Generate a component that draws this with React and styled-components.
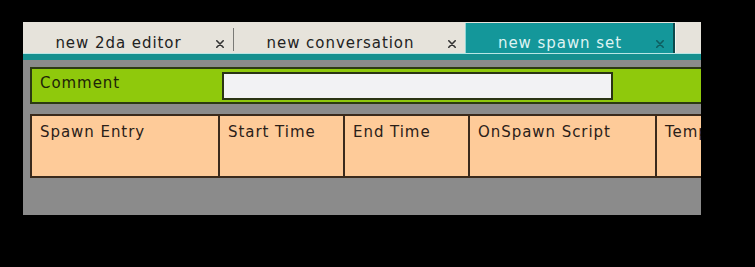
import React from "react";
import styled, { createGlobalStyle } from "styled-components";

const Global = createGlobalStyle`
  html, body { margin: 0; padding: 0; background: #000; }
  body { width: 755px; height: 267px; overflow: hidden; font-family: "DejaVu Sans", Verdana, sans-serif; }
`;

const Page = styled.div`
  padding: 22px 0 0 23px;
`;

const Panel = styled.div`
  width: 678px;
  height: 193px;
  background: #8b8b8b;
  overflow: hidden;
  display: flex;
  flex-direction: column;
`;

const TabBar = styled.div`
  display: flex;
  height: 31px;
  background: #e6e3db;
  flex: none;
`;

const Tab = styled.div`
  box-sizing: border-box;
  width: ${(p) => p.$width}px;
  flex: none;
  display: flex;
  align-items: center;
  padding-top: 10px;
  margin-top: ${(p) => (p.$active ? 1 : 0)}px;
  background: ${(p) => (p.$active ? "#14979a" : "transparent")};
  border-left: ${(p) => (p.$active ? "1px solid #8fd6d6" : "none")};
  border-right: ${(p) => (p.$active ? "2px solid #0d4a4c" : "none")};
`;

const TabLabel = styled.span`
  flex: 1;
  text-align: center;
  font-size: 15px;
  line-height: 18px;
  letter-spacing: 0.95px;
  color: ${(p) => (p.$active ? "#dff3f3" : "#222")};
  white-space: nowrap;
`;

const Close = styled.span`
  width: 12px;
  margin-right: 7px;
  display: flex;
  justify-content: center;
  align-items: center;
  padding-top: 2px;
  color: ${(p) => (p.$active ? "#0e5e60" : "#333")};
`;

const Divider = styled.div`
  width: 1px;
  margin: 6px 1px 2px 0;
  background: #7a7a76;
  flex: none;
`;

const Filler = styled.div`
  flex: 1;
  border-left: 1px solid #f6f4ee;
`;

const Stripe = styled.div`
  height: 6px;
  flex: none;
  background: #16908f;
  border-top: 1px solid #b9e6e4;
`;

const Body = styled.div`
  padding: 7px 0 0 7px;
  display: flex;
  flex-direction: column;
  gap: 10px;
`;

const FieldRow = styled.div`
  box-sizing: border-box;
  width: 720px;
  height: 37px;
  display: flex;
  align-items: flex-start;
  background: #8fc90c;
  border: 2px solid #2c3a12;
`;

const FieldLabel = styled.div`
  box-sizing: border-box;
  width: 190px;
  padding: 5px 0 0 8px;
  font-size: 15px;
  line-height: 18px;
  letter-spacing: 0.95px;
  color: #1d2408;
`;

const FieldInput = styled.div`
  box-sizing: border-box;
  margin-top: 3px;
  width: 391px;
  height: 28px;
  background: #f2f2f4;
  border: 2px solid #2a3414;
`;

const Table = styled.div`
  box-sizing: border-box;
  width: 720px;
  height: 64px;
  display: flex;
  background: #fecb99;
  border: 2px solid #3a2a1c;
`;

const HeadCell = styled.div`
  box-sizing: border-box;
  width: ${(p) => p.$width}px;
  flex: none;
  padding: 7px 0 0 8px;
  border-right: 2px solid #3a2a1c;
  font-size: 15px;
  line-height: 18px;
  letter-spacing: 0.95px;
  color: #2a2018;
  white-space: nowrap;
`;

const XIcon = () => (
  <svg width="8" height="8" viewBox="0 0 8 8">
    <path d="M0.8 0.8 L7.2 7.2 M7.2 0.8 L0.8 7.2" stroke="currentColor" strokeWidth="1.6" strokeLinecap="round" />
  </svg>
);

const tabs = [
  { label: "new 2da editor", width: 210 },
  { label: "new conversation", width: 230 },
  { label: "new spawn set", width: 210, active: true },
];

const columns = [
  { label: "Spawn Entry", width: 188 },
  { label: "Start Time", width: 125 },
  { label: "End Time", width: 125 },
  { label: "OnSpawn Script", width: 187 },
  { label: "Template", width: 120 },
];

export default function App() {
  return (
    <>
      <Global />
      <Page>
        <Panel>
          <TabBar>
            {tabs.map((t, i) => (
              <React.Fragment key={t.label}>
                <Tab $width={t.width} $active={t.active}>
                  <TabLabel $active={t.active}>{t.label}</TabLabel>
                  <Close $active={t.active}>
                    <XIcon />
                  </Close>
                </Tab>
                {i === 0 && <Divider />}
              </React.Fragment>
            ))}
            <Filler />
          </TabBar>
          <Stripe />
          <Body>
            <FieldRow>
              <FieldLabel>Comment</FieldLabel>
              <FieldInput />
            </FieldRow>
            <Table>
              {columns.map((c) => (
                <HeadCell key={c.label} $width={c.width}>
                  {c.label}
                </HeadCell>
              ))}
            </Table>
          </Body>
        </Panel>
      </Page>
    </>
  );
}
